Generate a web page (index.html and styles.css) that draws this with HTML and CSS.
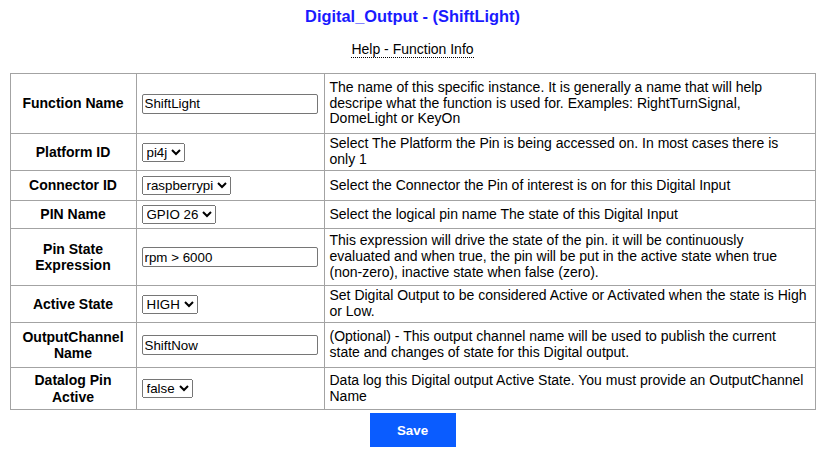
FILE: index.html
```html
<!DOCTYPE html>
<html>
<head>
<meta charset="utf-8">
<link rel="stylesheet" href="styles.css">
</head>
<body>
<h1 class="title">Digital_Output - (ShiftLight)</h1>
<div class="help"><span class="help-link">Help - Function Info</span></div>
<table class="form">
  <colgroup>
    <col class="c-label">
    <col class="c-input">
    <col class="c-desc">
  </colgroup>
  <tr class="h60">
    <td class="label">Function Name</td>
    <td class="field"><input class="text" type="text" value="ShiftLight"></td>
    <td class="desc">The name of this specific instance. It is generally a name that will help descripe what the function is used for. Examples: RightTurnSignal, DomeLight or KeyOn</td>
  </tr>
  <tr class="h37">
    <td class="label">Platform ID</td>
    <td class="field"><select><option>pi4j</option></select></td>
    <td class="desc">Select The Platform the Pin is being accessed on. In most cases there is only 1</td>
  </tr>
  <tr class="h30">
    <td class="label">Connector ID</td>
    <td class="field"><select><option>raspberrypi</option></select></td>
    <td class="desc">Select the Connector the Pin of interest is on for this Digital Input</td>
  </tr>
  <tr class="h28">
    <td class="label">PIN Name</td>
    <td class="field"><select><option>GPIO 26</option></select></td>
    <td class="desc">Select the logical pin name The state of this Digital Input</td>
  </tr>
  <tr class="h57">
    <td class="label">Pin State Expression</td>
    <td class="field"><input class="text" type="text" value="rpm &gt; 6000"></td>
    <td class="desc">This expression will drive the state of the pin. it will be continuously evaluated and when true, the pin will be put in the active state when true (non-zero), inactive state when false (zero).</td>
  </tr>
  <tr class="h37">
    <td class="label">Active State</td>
    <td class="field"><select><option>HIGH</option></select></td>
    <td class="desc desc-wide">Set Digital Output to be considered Active or Activated when the state is High or Low.</td>
  </tr>
  <tr class="h45">
    <td class="label">OutputChannel Name</td>
    <td class="field"><input class="text" type="text" value="ShiftNow"></td>
    <td class="desc">(Optional) - This output channel name will be used to publish the current state and changes of state for this Digital output.</td>
  </tr>
  <tr class="h42">
    <td class="label">Datalog Pin Active</td>
    <td class="field"><select><option>false</option></select></td>
    <td class="desc">Data log this Digital output Active State. You must provide an OutputChannel Name</td>
  </tr>
</table>
<div class="actions"><button class="save" type="button">Save</button></div>
</body>
</html>
```
FILE: styles.css
```css
body {
  margin: 8px;
  font-family: "Liberation Sans", Arial, sans-serif;
  color: #000;
  background: #fff;
}
.title {
  margin: 0;
  font-size: 16.4px;
  line-height: 16px;
  font-weight: bold;
  color: #1a1aff;
  text-align: center;
}
.help {
  margin-top: 17px;
  text-align: center;
  font-size: 14px;
  line-height: 16px;
}
.help-link {
  border-bottom: 1px dotted #000;
}
.form {
  margin: 16px auto 0;
  width: 805px;
  border-collapse: collapse;
  table-layout: fixed;
  font-size: 14px;
}
.c-label { width: 126px; }
.c-input { width: 188px; }
.c-desc { width: 491px; }
.form td {
  border: 1px solid #a3a3a3;
  padding: 2px 5px;
  vertical-align: middle;
}
.form td.label {
  font-weight: bold;
  text-align: center;
  line-height: 16.5px;
}
.form td.desc {
  line-height: 15.7px;
  padding-left: 5px;
  padding-right: 8px;
}
.form td.desc-wide {
  padding-right: 2px;
}
.h60 { height: 60px; }
.h57 { height: 57px; }
.h45 { height: 45px; }
.h42 { height: 42px; }
.h37 { height: 37px; }
.h30 { height: 30px; }
.h28 { height: 28px; }
.text {
  display: block;
  box-sizing: border-box;
  width: 176px;
  height: 20px;
  margin: 0;
  padding: 0 2px;
  border: 1px solid #767676;
  border-radius: 2px;
  font-family: "Liberation Sans", Arial, sans-serif;
  font-size: 13.33px;
  color: #000;
}
select {
  display: block;
  margin: 0;
  height: 19px;
  font-family: "Liberation Sans", Arial, sans-serif;
  font-size: 13.33px;
  color: #000;
}
.actions {
  text-align: center;
  margin-top: 3px;
}
.save {
  width: 86px;
  height: 34px;
  border: none;
  background: #0a5cff;
  color: #fff;
  font-family: "Liberation Sans", Arial, sans-serif;
  font-size: 13.33px;
  font-weight: bold;
  padding: 0;
}
```
